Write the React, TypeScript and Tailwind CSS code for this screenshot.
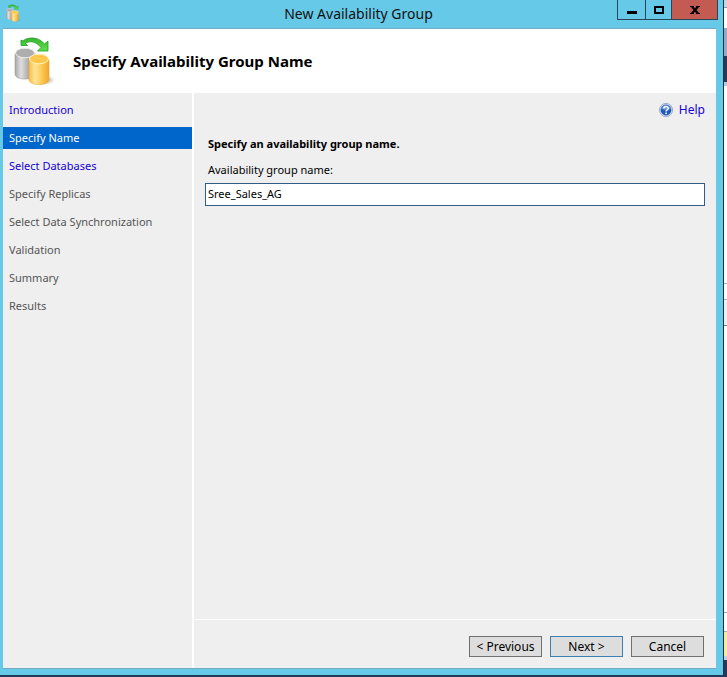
import { FC, useState } from "react";

type Step = {
  title: string;
  state: "link" | "active" | "disabled";
};

const steps: Step[] = [
  { title: "Introduction", state: "link" },
  { title: "Specify Name", state: "active" },
  { title: "Select Databases", state: "link" },
  { title: "Specify Replicas", state: "disabled" },
  { title: "Select Data Synchronization", state: "disabled" },
  { title: "Validation", state: "disabled" },
  { title: "Summary", state: "disabled" },
  { title: "Results", state: "disabled" },
];

const DatabaseIcon: FC<{ className: string }> = ({ className }) => (
  <svg className={className} viewBox="0 0 42 50" aria-hidden="true">
    <defs>
      <linearGradient id="silver" x1="0" x2="1">
        <stop offset="0" stopColor="#a8a8a8" />
        <stop offset=".3" stopColor="#dedede" />
        <stop offset=".6" stopColor="#b5b5b5" />
        <stop offset="1" stopColor="#858585" />
      </linearGradient>
      <linearGradient id="gold" x1="0" x2="1">
        <stop offset="0" stopColor="#f8bd45" />
        <stop offset=".3" stopColor="#ffe59a" />
        <stop offset=".6" stopColor="#fdcd59" />
        <stop offset="1" stopColor="#f1a628" />
      </linearGradient>
      <linearGradient id="green" x1="0" x2="0" y1="0" y2="1">
        <stop offset="0" stopColor="#35b52e" />
        <stop offset="1" stopColor="#62e04a" />
      </linearGradient>
      <radialGradient id="shadow">
        <stop offset="0" stopColor="#888" stopOpacity=".8" />
        <stop offset="1" stopColor="#888" stopOpacity="0" />
      </radialGradient>
    </defs>
    <ellipse cx="31" cy="44" rx="10" ry="5" fill="url(#shadow)" />
    <path d="M1 17v21c0 3 4 5 10 5s10-2 10-5V17z" fill="url(#silver)" stroke="#9a9a9a" strokeWidth=".6" />
    <ellipse cx="11" cy="17" rx="9.500" ry="4.800" fill="#aeaeae" stroke="#f0f0f0" strokeWidth="1" />
    <path d="M15 23v20.500c0 3 4 5 10 5s10-2 10-5V23z" fill="url(#gold)" stroke="#eaa935" strokeWidth=".6" />
    <ellipse cx="25" cy="23" rx="9.500" ry="4.800" fill="#fdc64c" stroke="#fff1bd" strokeWidth="1" />
    <path
      d="M7 9.500V4l2 1C13 1 24 0 30.500 8L34 5v10H23.500l3.500-3.500C22 5 15 4.500 11.500 7.500l2 2z"
      fill="url(#green)"
      stroke="#1d9f25"
      strokeWidth=".8"
      strokeLinejoin="round"
    />
  </svg>
);

const HelpIcon: FC = () => (
  <svg className="size-[14px]" viewBox="0 0 14 14" aria-hidden="true">
    <circle cx="7" cy="7" r="6.5" fill="#e4ecf6" stroke="#8ea3c6" strokeWidth="1" />
    <circle cx="7" cy="7" r="5.4" fill="#2259bd" />
    <path d="M2.2 5.8a5 5 0 0 1 9.600 0Q7 8 2.200 5.800z" fill="#6795dd" />
    <path d="M4.900 5.600c0-2.800 4.300-2.700 4.300-.2C9.200 7 7.100 6.900 7.100 8.600" fill="none" stroke="#fff" strokeWidth="1.500" />
    <rect x="6.300" y="9.500" width="1.600" height="1.600" fill="#fff" />
  </svg>
);

// Sliver of the application that stays visible behind the dialog
const Backdrop: FC = () => (
  <div className="w-[3px] flex flex-col bg-white" aria-hidden="true">
    <div className="h-2 bg-[#ccd3e0] border-b border-[#8d97ad]" />
    <div className="h-5" />
    <div className="h-7 bg-[#9aa7c2]" />
    <div className="h-[26px] bg-[#293955]" />
    <div className="h-1 bg-[#bcc7da]" />
    <div className="h-[198px] border-b border-[#b5b5b5]" />
    <div className="h-4 border-b border-[#b5b5b5]" />
    <div className="h-[26px] bg-[#efefef] border-b border-[#777]" />
    <div className="grow" />
    <div className="h-5 border-y border-[#aaa]" />
    <div className="h-6 bg-[#f3ec9c]" />
    <div className="h-1 bg-[#c3cfe2]" />
    <div className="h-[17px] bg-[#293955]" />
  </div>
);

const TitleBar: FC = () => (
  <div className="h-7 flex items-start">
    <div className="w-[100px] pl-1.5 pt-1">
      <DatabaseIcon className="w-[15px] h-[18px]" />
    </div>
    <h1 className="grow text-center text-[14px] leading-7 text-[#111]">
      New Availability Group
    </h1>
    <div className="h-5 mr-[5px] flex border border-t-0 border-[#28475a]">
      <button type="button" aria-label="Minimize" className="w-7 border-r border-[#28475a] flex justify-center items-center">
        <svg className="w-[10px] h-[10px]" viewBox="0 0 10 10">
          <path d="M0 6h10v3H0z" />
        </svg>
      </button>
      <button type="button" aria-label="Maximize" className="w-[26px] border-r border-[#28475a] flex justify-center items-center">
        <svg className="w-[10px] h-[8px]" viewBox="0 0 10 8">
          <path d="M1 1h8v6H1z" fill="none" stroke="#000" strokeWidth="2" />
        </svg>
      </button>
      <button type="button" aria-label="Close" className="w-[45px] bg-[#c35b52] flex justify-center items-center">
        <svg className="w-[10px] h-[8px]" viewBox="0 0 10 8">
          <path d="M0 0h4v1L5 2.500 6 1V0h4v1H9L6.500 4 9 7h1v1H6V7L5 5.500 4 7v1H0V7h1l2.500-3L1 1H0z" />
        </svg>
      </button>
    </div>
  </div>
);

const Sidebar: FC = () => (
  <nav className="w-[191px] shrink-0 border-r-2 border-white pt-1.5 text-[11px]">
    <ul className="flex flex-col gap-1.5">
      {steps.map((step) => (
        <li key={step.title}>
          {step.state === "disabled" ? (
            <span className="block px-1.5 leading-[22px] text-[#555555]">{step.title}</span>
          ) : (
            <a
              href="#"
              className={
                step.state === "active"
                  ? "block px-1.5 leading-[22px] bg-[#0066cc] text-white"
                  : "block px-1.5 leading-[22px] text-[#1500d8]"
              }
            >
              {step.title}
            </a>
          )}
        </li>
      ))}
    </ul>
  </nav>
);

const App: FC = () => {
  const [groupName, setGroupName] = useState("Sree_Sales_AG");

  return (
    <div className="min-h-screen flex bg-[#293955] font-['Noto_Sans',sans-serif] text-[12px] text-black">
      <div className="grow flex flex-col border-b-2 border-[#1f3a5c]">
        <div className="grow flex flex-col bg-[#67c9e8] border-r border-[#17384a] pb-1.5">
          <TitleBar />
          <div className="grow ml-[3px] mr-[7px] flex flex-col bg-[#efefef] border-y border-[#74a9c3]">
            <header className="h-16 pl-[11px] flex items-center gap-[17px] bg-white">
              <DatabaseIcon className="w-[42px] h-[50px]" />
              <h2 className="text-[15px] font-bold">
                Specify Availability Group Name
              </h2>
            </header>
            <div className="grow flex">
              <Sidebar />
              <div className="grow flex flex-col">
                <main className="grow px-[11px] pt-2">
                  <div className="flex justify-end">
                    <a href="#" className="flex items-center gap-1.5 leading-[18px] text-[#1500d8]">
                      <HelpIcon />
                      Help
                    </a>
                  </div>
                  <h3 className="mt-4 px-[3px] text-[11px] leading-[18px] font-bold">
                    Specify an availability group name.
                  </h3>
                  <label htmlFor="groupName" className="block mt-2 px-[3px] text-[11px] leading-[18px]">
                    Availability group name:
                  </label>
                  <input
                    id="groupName"
                    type="text"
                    className="mt-1 block w-full h-[23px] px-0.5 pb-0.5 text-[11px] bg-white border border-[#2f5d86] outline-none"
                    value={groupName}
                    onChange={(e) => setGroupName(e.target.value)}
                  />
                </main>
                <footer className="h-[49px] pr-3 flex items-center justify-end gap-2 border-t border-white pt-1">
                  <button type="button" className="w-[73px] h-[21px] leading-[19px] bg-[#dddddd] border border-[#707070]">
                    &lt; Previous
                  </button>
                  <button type="button" className="w-[73px] h-[21px] leading-[19px] bg-[#dddddd] border border-[#3c7fb1]">
                    Next &gt;
                  </button>
                  <button type="button" className="w-[73px] h-[21px] leading-[19px] bg-[#dddddd] border border-[#707070]">
                    Cancel
                  </button>
                </footer>
              </div>
            </div>
          </div>
        </div>
      </div>
      <Backdrop />
    </div>
  );
};

export default App;
